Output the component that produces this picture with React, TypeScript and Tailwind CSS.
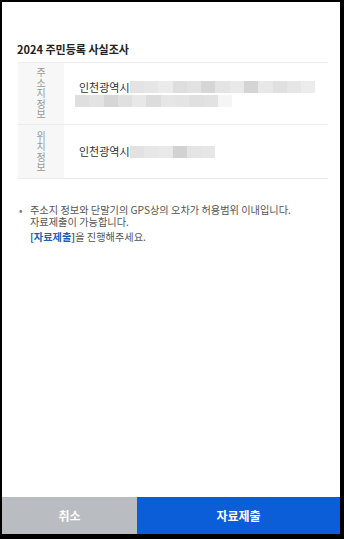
const line1 = [
  'bg-[#e3e3e3]', 'bg-[#e6e6e6]', 'bg-[#ebebeb]', 'bg-[#dedede]', 'bg-[#e2e2e2]', 'bg-[#d6d6d6]', 'bg-[#e4e4e4]',
  'bg-[#e9e9e9]', 'bg-[#d4d4d4]', 'bg-[#e8e8e8]', 'bg-[#e0e0e0]', 'bg-[#e6e6e6]', 'bg-[#ececec]',
];
const line2 = [
  'bg-[#dfdfdf]', 'bg-[#e3e3e3]', 'bg-[#d6d6d6]', 'bg-[#e0e0e0]', 'bg-[#e8e8e8]', 'bg-[#dcdcdc]', 'bg-[#e6e6e6]',
  'bg-[#e4e4e4]', 'bg-[#e0e0e0]', 'bg-[#e2e2e2]', 'bg-[#f5f5f5]',
];
const line3 = ['bg-[#e2e2e2]', 'bg-[#e7e7e7]', 'bg-[#e9e9e9]', 'bg-[#d2d2d2]', 'bg-[#e4e4e4]', 'bg-[#e6e6e6]'];

const Mosaic = ({ tiles }: { tiles: string[] }) => (
  <span className="flex h-[12px]">
    {tiles.map((c, i) => (
      <span key={i} className={`w-[14.3px] h-full ${c}`} />
    ))}
  </span>
);

// label text wraps one syllable per line, like the original narrow th
const Label = ({ text }: { text: string }) => (
  <div className="w-[46px] shrink-0 bg-[#f7f7f7] flex items-center justify-center">
    <span className="w-[11px] break-all text-center text-[10px] leading-[10.5px] text-[#999]">{text}</span>
  </div>
);

export default function App() {
  return (
    <div
      className="w-[344px] h-[539px] bg-black pt-[2px] pl-[2px] pr-[4px] pb-[5px]"
      style={{ fontFamily: '"Noto Sans CJK KR", "Noto Sans", sans-serif' }}
    >
      <div className="h-full bg-white flex flex-col">
        <div className="flex-1">
          <h1 className="mt-[39px] ml-[15px] text-[11px] leading-[16px] font-bold text-[#222]">
            2024 주민등록 사실조사
          </h1>
          <div className="mt-[5px] ml-[16px] mr-[12px] border-t border-b border-[#ececec]">
            <div className="flex h-[62px] border-b border-[#ececec]">
              <Label text="주소지정보" />
              <div className="flex flex-col justify-center pl-[15px] text-[11px] text-[#333] leading-[13px]">
                <div className="flex items-center">
                  <span>인천광역시</span>
                  <Mosaic tiles={line1} />
                </div>
                <div className="-ml-[4px] mt-[1px]">
                  <Mosaic tiles={line2} />
                </div>
              </div>
            </div>
            <div className="flex h-[53px]">
              <Label text="위치정보" />
              <div className="flex items-center pl-[15px] text-[11px] text-[#333] leading-[13px]">
                <span>인천광역시</span>
                <Mosaic tiles={line3} />
              </div>
            </div>
          </div>
          <div className="mt-[25px] ml-[17px] mr-[10px] flex text-[10.2px] leading-[12px] text-[#555]">
            <span className="w-[11px] shrink-0 text-[#777]">•</span>
            <div>
              <p className="whitespace-pre-line">
                {'주소지 정보와 단말기의 GPS상의 오차가 허용범위 이내입니다.\n자료제출이 가능합니다.'}
              </p>
              <p className="mt-[3px]">
                <span className="font-bold text-[#1f5fb8]">[자료제출]</span>을 진행해주세요.
              </p>
            </div>
          </div>
        </div>
        <div className="flex h-[37px]">
          <button className="w-[135px] bg-[#b9bcc1] text-white text-[12px] font-bold">취소</button>
          <button className="flex-1 bg-[#0b5ed8] text-white text-[12px] font-bold">자료제출</button>
        </div>
      </div>
    </div>
  );
}
